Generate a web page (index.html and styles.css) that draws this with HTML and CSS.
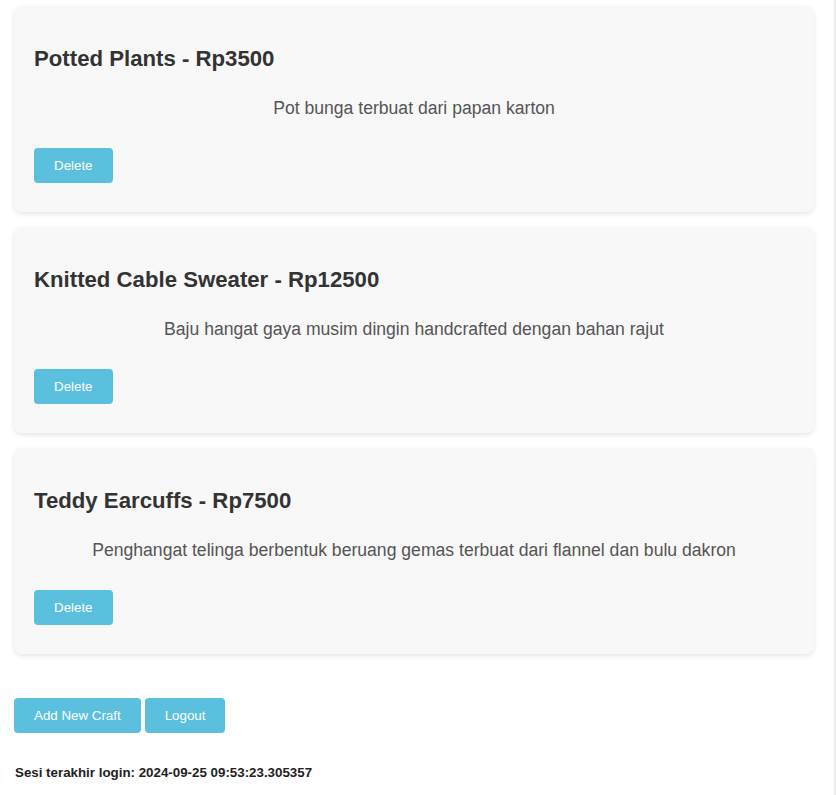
FILE: index.html
```html
<!DOCTYPE html>
<html lang="id">
<head>
<meta charset="utf-8">
<title>Crafts</title>
<link rel="stylesheet" href="styles.css">
</head>
<body>
<div class="page">
  <div class="list">
    <div class="card">
      <h2 class="card-title">Potted Plants - Rp3500</h2>
      <p class="card-desc">Pot bunga terbuat dari papan karton</p>
      <div class="card-actions"><button class="btn">Delete</button></div>
    </div>
    <div class="card">
      <h2 class="card-title">Knitted Cable Sweater - Rp12500</h2>
      <p class="card-desc">Baju hangat gaya musim dingin handcrafted dengan bahan rajut</p>
      <div class="card-actions"><button class="btn">Delete</button></div>
    </div>
    <div class="card">
      <h2 class="card-title">Teddy Earcuffs - Rp7500</h2>
      <p class="card-desc">Penghangat telinga berbentuk beruang gemas terbuat dari flannel dan bulu dakron</p>
      <div class="card-actions"><button class="btn">Delete</button></div>
    </div>
  </div>
  <div class="actions">
    <button class="btn">Add New Craft</button>
    <button class="btn">Logout</button>
  </div>
  <p class="session">Sesi terakhir login: 2024-09-25 09:53:23.305357</p>
</div>
</body>
</html>
```

FILE: styles.css
```css
html, body {
  margin: 0;
  padding: 0;
  background: #ffffff;
}

body {
  font-family: "Liberation Sans", Arial, sans-serif;
  color: #333333;
}

.page {
  width: 836px;
  min-height: 100vh;
  box-sizing: border-box;
  padding: 6px 20px 0 14px;
  border-right: 2px solid #ececec;
}

.list {
  display: flex;
  flex-direction: column;
  gap: 15px;
}

.card {
  background: #f8f8f8;
  border-radius: 8px;
  box-shadow: 0 2px 5px rgba(0, 0, 0, 0.1);
  padding: 20px 20px 29px;
}

.card-title {
  font-size: 22.2px;
  font-weight: bold;
  color: #333333;
  margin: 20px 0 26px;
  line-height: normal;
}

.card-desc {
  font-size: 17.6px;
  color: #555555;
  text-align: center;
  margin: 0 0 29px;
  line-height: normal;
}

.card-actions {
  display: flex;
}

.btn {
  font-family: "Liberation Sans", Arial, sans-serif;
  font-size: 13.333px;
  line-height: normal;
  color: #ffffff;
  background: #5bc0de;
  border: none;
  border-radius: 4px;
  padding: 10px 20px;
  cursor: pointer;
}

.actions {
  display: flex;
  gap: 4px;
  margin-top: 44px;
}

.session {
  margin: 32px 0 0 1px;
  font-size: 13.333px;
  font-weight: bold;
  color: #222222;
}
```
